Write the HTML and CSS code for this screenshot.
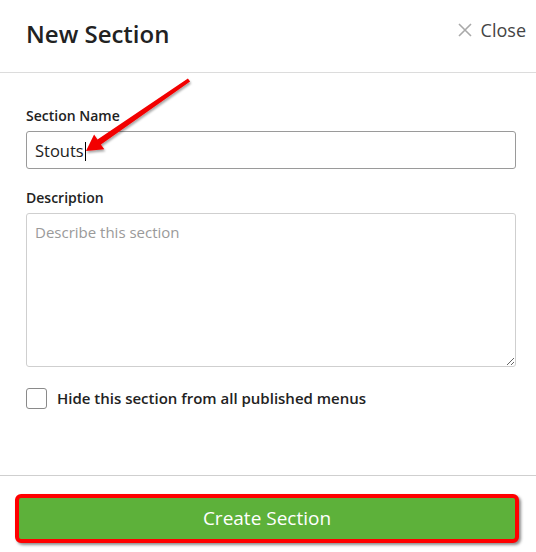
FILE: index.html
```html
<!DOCTYPE html>
<html lang="en">
<head>
    <meta charset="UTF-8">
    <title>New Section</title>
    <link rel="stylesheet" href="styles.css">
</head>
<body>

<div class="modal">
    <div class="header">
        <h1 class="title">New Section</h1>
        <span class="close">
            <svg class="close-icon" width="14" height="14" viewBox="0 0 14 14">
                <path d="M1 1 L13 13 M13 1 L1 13" stroke="#a9a9a9" stroke-width="1.6" fill="none"/>
            </svg>
            Close
        </span>
    </div>

    <div class="body">
        <label class="label">Section Name</label>
        <div class="field">Stouts<span class="caret"></span></div>

        <label class="label desc">Description</label>
        <textarea class="area" placeholder="Describe this section"></textarea>

        <div class="check-row">
            <span class="checkbox"></span>
            <span class="check-label">Hide this section from all published menus</span>
        </div>
    </div>

    <div class="footer">
        <button class="create">Create Section</button>
    </div>

    <!-- annotation arrow over the form -->
    <svg class="arrow" width="536" height="552" viewBox="0 0 536 552">
        <defs>
            <filter id="shadow" x="-20%" y="-20%" width="140%" height="140%">
                <feDropShadow dx="1" dy="2" stdDeviation="1.2" flood-color="#000" flood-opacity="0.35"/>
            </filter>
        </defs>
        <polygon filter="url(#shadow)" fill="#f20000"
                 points="187.9,78.4 190.1,81.6 100.9,144.4 104.3,149.3 86,151 94.1,134.5 97.5,139.4"/>
    </svg>
</div>

</body>
</html>
```

FILE: styles.css
```css
body {
    margin: 0;
    background: #fff;
    font-family: "Open Sans", Lato, sans-serif;
    color: #222;
}
.modal {
    position: relative;
    width: 536px;
    height: 552px;
}
.header {
    height: 72px;
    display: flex;
    justify-content: space-between;
    align-items: flex-start;
    padding: 0 10px 0 26px;
    border-bottom: 1px solid #dcdcdc;
}
.title {
    margin: 0;
    padding-top: 19px;
    font-size: 24px;
    line-height: 30px;
    font-weight: 600;
    color: #222;
}
.close {
    display: flex;
    align-items: center;
    gap: 9px;
    padding-top: 19px;
    font-size: 18px;
    line-height: 22px;
    color: #444;
}
.close-icon {
    display: block;
}
.body {
    height: 369px;
    padding: 33px 20px 0 26px;
}
.label {
    display: block;
    font-size: 14px;
    line-height: 20px;
    font-weight: 600;
    color: #222;
}
.label.desc {
    margin-top: 19px;
}
.field {
    margin-top: 5px;
    height: 38px;
    box-sizing: border-box;
    border: 1px solid #9a9a9a;
    border-radius: 3px;
    padding: 0 8px;
    display: flex;
    align-items: center;
    font-size: 16.5px;
    color: #222;
}
.caret {
    display: inline-block;
    width: 1px;
    height: 19px;
    background: #000;
    margin-left: 1px;
    margin-top: 2px;
}
.area {
    display: block;
    margin-top: 5px;
    width: 100%;
    height: 154px;
    box-sizing: border-box;
    border: 1px solid #cfcfcf;
    border-radius: 3px;
    padding: 8px 8px;
    font-family: inherit;
    font-size: 15px;
    resize: vertical;
}
.area::placeholder {
    color: #9a9a9a;
}
.check-row {
    display: flex;
    align-items: center;
    gap: 10px;
    margin-top: 21px;
}
.checkbox {
    width: 21px;
    height: 21px;
    box-sizing: border-box;
    border: 1px solid #8a8a8a;
    border-radius: 3px;
}
.check-label {
    font-size: 15px;
    font-weight: 600;
    line-height: 18px;
    margin-top: -2px;
    color: #222;
}
.footer {
    border-top: 1px solid #cfcfcf;
    padding: 18px 17px 0 15px;
}
.create {
    display: block;
    width: 100%;
    height: 49px;
    padding-bottom: 2px;
    border: 4px solid #ff0000;
    border-radius: 6px;
    background: #5db13a;
    color: #fff;
    font-family: inherit;
    font-size: 19px;
    font-weight: 400;
    box-shadow: 2px 2px 3px rgba(0, 0, 0, 0.45);
}
.arrow {
    position: absolute;
    left: 0;
    top: 0;
    pointer-events: none;
}
```
